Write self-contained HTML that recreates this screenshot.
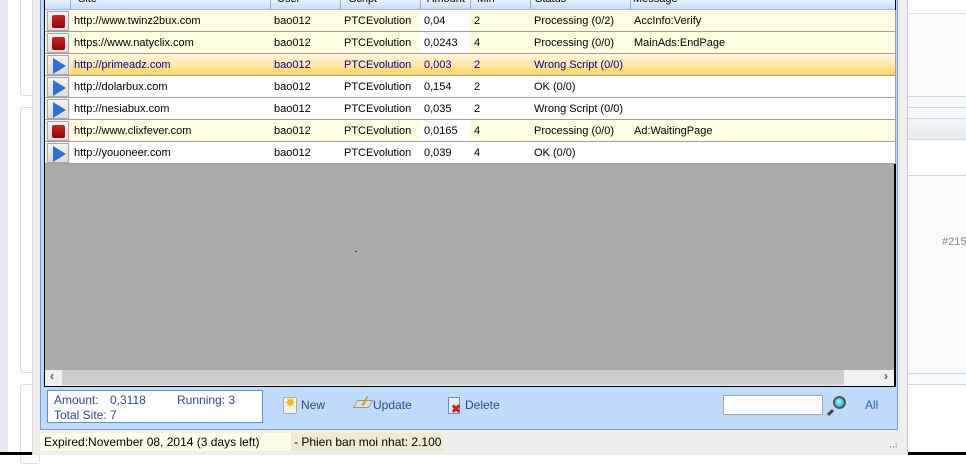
<!DOCTYPE html>
<html><head><meta charset="utf-8"><style>
*{margin:0;padding:0;box-sizing:border-box}
body{width:966px;height:455px;overflow:hidden;background:#fff;font-family:"Liberation Sans",sans-serif;font-size:11px;position:relative;color:#000}
.a{position:absolute}
.cell{position:absolute;height:22px;line-height:22px;padding-left:4px;white-space:nowrap;overflow:hidden;border-right:1px solid #a0a0a0;border-bottom:1px solid #a0a0a0}
.btn{position:absolute;left:47px;width:22px;height:20px;border:1px solid #a8a8a8;background:linear-gradient(#f4f4f4,#dcdcdc)}
.stop{position:absolute;left:4px;top:3px;width:13px;height:13px;background:linear-gradient(#d42020,#8a0808);border-radius:2px}
.play{position:absolute;left:5px;top:2px;width:0;height:0;border-top:8px solid transparent;border-bottom:8px solid transparent;border-left:13px solid #2f6fd6}
</style></head><body>
<div class="a" style="left:0;top:0;width:8px;height:455px;background:#e6e9f0"></div>
<div class="a" style="left:8px;top:0;width:24px;height:455px;background:#fff"></div>
<div class="a" style="left:20px;top:-5px;width:20px;height:101px;border:1px solid #d4e0ee;border-radius:3px"></div>
<div class="a" style="left:20px;top:107px;width:20px;height:266px;border:1px solid #d4e0ee;border-radius:3px"></div>
<div class="a" style="left:20px;top:384px;width:20px;height:80px;border:1px solid #d4e0ee;border-radius:3px"></div>
<div class="a" style="left:907px;top:0;width:59px;height:455px;background:#f9fafc;border-left:1px solid #c8c8c8"></div>
<div class="a" style="left:908px;top:0;width:58px;height:14px;background:#fff;border-bottom:1px solid #d0dff0"></div>
<div class="a" style="left:908px;top:96px;width:58px;height:1px;background:#c8daf0"></div>
<div class="a" style="left:908px;top:107px;width:58px;height:1px;background:#c8daf0"></div>
<div class="a" style="left:908px;top:118px;width:58px;height:22px;background:linear-gradient(#f4f5f8,#e8ebf2);border-top:1px solid #c8daf0;border-bottom:1px solid #c8daf0"></div>
<div class="a" style="left:908px;top:140px;width:58px;height:36px;background:#fff;border-bottom:1px solid #c8daf0"></div>
<div class="a" style="left:942px;top:236px;color:#888;font-size:11px">#215</div>
<div class="a" style="left:908px;top:373px;width:58px;height:1px;background:#c8daf0"></div>
<div class="a" style="left:908px;top:384px;width:58px;height:71px;background:#fff;border-top:1px solid #c8daf0"></div>
<div class="a" style="left:908px;top:452px;width:58px;height:3px;background:#000"></div>
<div class="a" style="left:32px;top:0;width:875px;height:455px;background:#efefef;border-left:1px solid #d8d8d8"></div>
<div class="a" style="left:40px;top:0;width:858px;height:430px;background:#bfdbfc;border:1px solid #6d9fe0;border-top:none"></div>
<div class="a" style="left:44px;top:0;width:852px;height:387px;background:#ababab;border:1px solid #000;border-top:none;border-right:2px solid #000"></div>
<div class="a" style="left:45px;top:0;width:850px;height:10px;background:linear-gradient(#e8f2ff,#c4dcf8);border-bottom:1px solid #a0b8d8;overflow:hidden">
<span class="a" style="left:33px;top:-7px">Site</span><span class="a" style="left:232px;top:-7px">User</span><span class="a" style="left:304px;top:-7px">Script</span><span class="a" style="left:382px;top:-7px">Amount</span><span class="a" style="left:432px;top:-7px">Min</span><span class="a" style="left:490px;top:-7px">Status</span><span class="a" style="left:588px;top:-7px">Message</span>
<div class="a" style="left:25px;top:0;width:1px;height:10px;background:#9ab"></div><div class="a" style="left:225px;top:0;width:1px;height:10px;background:#9ab"></div><div class="a" style="left:295px;top:0;width:1px;height:10px;background:#9ab"></div><div class="a" style="left:375px;top:0;width:1px;height:10px;background:#9ab"></div><div class="a" style="left:425px;top:0;width:1px;height:10px;background:#9ab"></div><div class="a" style="left:485px;top:0;width:1px;height:10px;background:#9ab"></div><div class="a" style="left:585px;top:0;width:1px;height:10px;background:#9ab"></div>
</div>
<div id="rows"></div>
<script>
var R=[["s","http://www.twinz2bux.com","0,04","2","Processing (0/2)","AccInfo:Verify","y"],
["s","https://www.natyclix.com","0,0243","4","Processing (0/0)","MainAds:EndPage","y"],
["p","http://primeadz.com","0,003","2","Wrong Script (0/0)","","o"],
["p","http://dolarbux.com","0,154","2","OK (0/0)","","w"],
["p","http://nesiabux.com","0,035","2","Wrong Script (0/0)","","w"],
["s","http://www.clixfever.com","0,0165","4","Processing (0/0)","Ad:WaitingPage","y"],
["p","http://youoneer.com","0,039","4","OK (0/0)","","w"]];
var cols=[[70,200],[270,70],[340,80],[420,50],[470,60],[530,100],[630,265]];
var h="";
R.forEach(function(r,i){var t=10+i*22;
var bg=r[6]=="y"?"#fffde0":r[6]=="o"?"linear-gradient(#fff6dc,#ffe9a8 50%,#fdd25a)":"#fff";
var col=r[6]=="o"?"#0000a0":"#000";
h+='<div class="a" style="left:45px;top:'+t+'px;width:26px;height:22px;background:#f0f0f0;border-right:1px solid #a0a0a0;border-bottom:1px solid #a0a0a0"></div>';
h+='<div class="btn" style="top:'+(t+1)+'px"><div class="'+(r[0]=="s"?"stop":"play")+'"></div></div>';
var vals=[r[1],"bao012","PTCEvolution",r[2],r[3],r[4],r[5]];
cols.forEach(function(c,j){var b=bg;if(j==3&&r[6]=="y")b="#fff";
h+='<div class="cell" style="left:'+c[0]+'px;top:'+t+'px;width:'+(c[1]+1)+'px;background:'+b+';color:'+col+'">'+vals[j]+'</div>';});
});
document.getElementById("rows").innerHTML=h;
</script>
<div class="a" style="left:355px;top:251px;width:2px;height:1px;background:#333"></div>
<div class="a" style="left:45px;top:370px;width:849px;height:16px;background:#f0f0f0"></div>
<div class="a" style="left:62px;top:370px;width:782px;height:15px;background:#cdcdcd"></div>
<div class="a" style="left:50px;top:369px;color:#555;font-size:12px;font-weight:bold">‹</div>
<div class="a" style="left:884px;top:369px;color:#555;font-size:12px;font-weight:bold">›</div>
<div class="a" style="left:47px;top:390px;width:216px;height:33px;background:#fff;border:1px solid #5b8fd4;color:#2c4a8a;font-size:12px">
<span class="a" style="left:6px;top:2px">Amount:</span><span class="a" style="left:62px;top:2px">0,3118</span><span class="a" style="left:129px;top:2px">Running: 3</span><span class="a" style="left:6px;top:17px">Total Site: 7</span></div>
<div class="a" style="left:283px;top:397px;width:14px;height:17px;background:#f2f2f2;border:1px solid #aaa;border-radius:2px"></div>
<div class="a" style="left:285px;top:395px;color:#f0c000;font-size:13px">✸</div>
<div class="a" style="left:301px;top:398px;color:#2c4a8a;font-size:12px">New</div>
<div class="a" style="left:355px;top:400px;width:16px;height:8px;background:#ddd;transform:skewX(-30deg);border:1px solid #999"></div>
<div class="a" style="left:364px;top:396px;width:2px;height:10px;background:#d8a020;transform:rotate(30deg)"></div>
<div class="a" style="left:373px;top:398px;color:#2c4a8a;font-size:12px">Update</div>
<div class="a" style="left:448px;top:397px;width:12px;height:17px;background:#e8eef8;border:1px solid #6a8ac0"></div>
<div class="a" style="left:451px;top:402px;color:#d02020;font-size:12px;font-weight:bold">✖</div>
<div class="a" style="left:465px;top:398px;color:#2c4a8a;font-size:12px">Delete</div>
<div class="a" style="left:723px;top:395px;width:100px;height:20px;background:#fff;border:1px solid #a8a8a8"></div>
<div class="a" style="left:833px;top:396px;width:13px;height:13px;border-radius:50%;background:radial-gradient(circle at 40% 40%,#8ff,#0ac);border:2px solid #555"></div>
<div class="a" style="left:829px;top:409px;width:3px;height:7px;background:#444;transform:rotate(45deg)"></div>
<div class="a" style="left:865px;top:398px;color:#3060b0;font-size:12px">All</div>
<div class="a" style="left:40px;top:433px;width:251px;height:18px;background:#fffde8;font-size:12px;line-height:18px;padding-left:4px">Expired:November 08, 2014 (3 days left)</div>
<div class="a" style="left:291px;top:433px;width:152px;height:18px;background:#f0ead2;font-size:12px;line-height:18px;padding-left:3px">- Phien ban moi nhat: 2.100</div>
<div class="a" style="left:886px;top:440px;color:#999;font-size:9px;letter-spacing:-1px">⠠⠴</div>
<div class="a" style="left:0;top:452px;width:32px;height:3px;background:#000"></div>
</body></html>
